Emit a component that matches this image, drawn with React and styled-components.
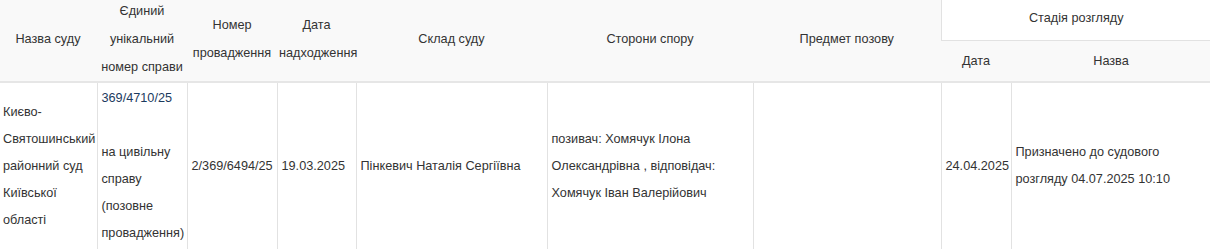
import React from 'react';
import styled, { createGlobalStyle } from 'styled-components';

const GlobalStyle = createGlobalStyle`
  body {
    margin: 0;
    background: #fff;
    font-family: "Liberation Sans", Arial, sans-serif;
    overflow: hidden;
  }
`;

const Wrapper = styled.div`
  margin-top: -4px;
  margin-left: -1px;
  width: 1212px;
`;

const Table = styled.table`
  width: 100%;
  table-layout: fixed;
  border-collapse: collapse;
  font-size: 12.7px;
  color: #333;
`;

const Head = styled.thead`
  background: #f9f9f9;
  border-bottom: 2px solid #e6e6e6;
`;

const Th = styled.th`
  font-weight: normal;
  color: #333;
  text-align: center;
  vertical-align: middle;
  line-height: 28px;
  padding: 0 2px;
  height: ${p => p.$h || 'auto'};
  background: ${p => (p.$white ? '#fff' : 'transparent')};
  border-left: ${p => (p.$bordered ? '1px solid #e2e2e2' : 'none')};
  border-bottom: ${p => (p.$bordered ? '1px solid #e2e2e2' : 'none')};
`;

const Td = styled.td`
  vertical-align: middle;
  line-height: 27px;
  padding: 2px 3px 2px 4px;
  border-left: 1px solid #e2e2e2;
  white-space: ${p => (p.$nowrap ? 'nowrap' : 'normal')};
  &:first-child {
    border-left: none;
  }
`;

const CaseLink = styled.a`
  color: #1b3a5e;
  text-decoration: none;
`;

const cols = [98, 90, 90, 79, 191, 206, 188, 70, 200];

export default function App() {
  return (
    <Wrapper>
      <GlobalStyle />
      <Table>
        <colgroup>
          {cols.map((w, i) => (
            <col key={i} style={{ width: w }} />
          ))}
        </colgroup>
        <Head>
          <tr>
            <Th rowSpan={2}>Назва суду</Th>
            <Th rowSpan={2}>Єдиний унікальний номер справи</Th>
            <Th rowSpan={2}>Номер провадження</Th>
            <Th rowSpan={2}>Дата надходження</Th>
            <Th rowSpan={2}>Склад суду</Th>
            <Th rowSpan={2}>Сторони спору</Th>
            <Th rowSpan={2}>Предмет позову</Th>
            <Th colSpan={2} $white $bordered $h="44px">Стадія розгляду</Th>
          </tr>
          <tr>
            <Th $h="40px">Дата</Th>
            <Th $h="40px">Назва</Th>
          </tr>
        </Head>
        <tbody>
          <tr>
            <Td>Києво-Святошинський районний суд Київської області</Td>
            <Td>
              <CaseLink href="#">369/4710/25</CaseLink>
              <br />
              <br />
              на цивільну справу (позовне провадження)
            </Td>
            <Td $nowrap>2/369/6494/25</Td>
            <Td $nowrap>19.03.2025</Td>
            <Td>Пінкевич Наталія Сергіївна</Td>
            <Td>позивач: Хомячук Ілона Олександрівна , відповідач: Хомячук Іван Валерійович</Td>
            <Td></Td>
            <Td $nowrap>24.04.2025</Td>
            <Td>Призначено до судового розгляду 04.07.2025 10:10</Td>
          </tr>
        </tbody>
      </Table>
    </Wrapper>
  );
}
